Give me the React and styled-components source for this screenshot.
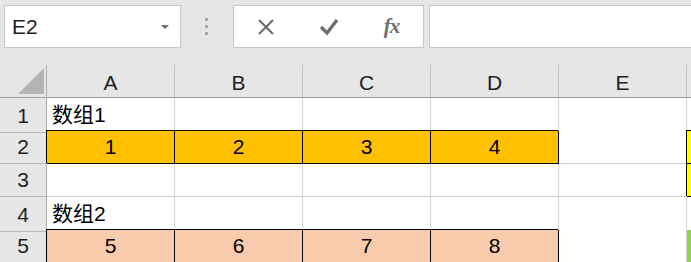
import React from 'react'
import styled, {createGlobalStyle} from 'styled-components'

const GlobalStyle = createGlobalStyle`
  html, body {
    margin: 0;
    padding: 0;
    background: #e6e6e6;
  }
  body {
    font-family: "Liberation Sans", "Noto Sans CJK SC", sans-serif;
  }
`

const Sheet = styled.div`
  width: 691px;
  height: 262px;
  overflow: hidden;
  background: #e6e6e6;
`

const FormulaBar = styled.div`
  display: flex;
  align-items: flex-start;
  height: 65px;
  box-sizing: border-box;
  padding: 5px 0 0 4px;
`

const Box = styled.div`
  height: 43px;
  box-sizing: border-box;
  border: 1px solid #c6c6c6;
  background: #fff;
  display: flex;
  align-items: center;
`

const NameBox = styled(Box)`
  width: 177px;
  flex: none;
  justify-content: space-between;
  padding: 0 11px 0 7px;
  font-size: 21px;
  color: #1e1e1e;
`

const Caret = styled.span`
  width: 0;
  height: 0;
  border-left: 4px solid transparent;
  border-right: 4px solid transparent;
  border-top: 4px solid #6d6d6d;
`

const Grip = styled.div`
  display: flex;
  flex-direction: column;
  gap: 4px;
  margin: 13px 25px 0 24px;
  span {
    width: 3px;
    height: 3px;
    background: #a8a8a8;
  }
`

const ActionBox = styled(Box)`
  width: 191px;
  flex: none;
`

const Action = styled.div`
  width: 63px;
  height: 100%;
  display: flex;
  align-items: center;
  justify-content: center;
  color: #6e6e6e;
`

const Fx = styled.span`
  font-family: "Liberation Serif", serif;
  font-style: italic;
  font-weight: bold;
  font-size: 21px;
  color: #707070;
  letter-spacing: -1px;
  margin-top: -1px;
`

const InputBox = styled(Box)`
  flex: 1;
  margin-left: 5px;
  margin-right: -2px;
`

const Row = styled.div`
  display: grid;
  grid-template-columns: 47px repeat(6, 128px);
  height: 33px;
`

const Corner = styled.div`
  box-sizing: border-box;
  border-right: 1px solid #ababab;
  border-bottom: 1px solid #9f9f9f;
  display: flex;
  align-items: flex-end;
  justify-content: flex-end;
  padding: 0 2px 3px 0;
  &::after {
    content: '';
    width: 26px;
    height: 26px;
    background: #b4b4b4;
    clip-path: polygon(100% 0, 100% 100%, 0 100%);
  }
`

const ColHead = styled.div`
  box-sizing: border-box;
  border-right: 1px solid #c3c3c3;
  border-bottom: 1px solid #9f9f9f;
  display: flex;
  align-items: center;
  justify-content: center;
  padding-top: 3px;
  font-size: 21px;
  color: #1e1e1e;
`

const RowHead = styled.div`
  box-sizing: border-box;
  border-right: 1px solid #ababab;
  border-bottom: 1px solid #b8b8b8;
  display: flex;
  align-items: flex-end;
  justify-content: center;
  padding-bottom: 4px;
  font-size: 21px;
  color: #1e1e1e;
`

const Cell = styled.div`
  position: relative;
  box-sizing: border-box;
  background: ${p => p.$fill || '#fff'};
  border-right: 1px solid ${p => p.$boxed ? '#000' : '#d4d4d4'};
  border-bottom: 1px solid ${p => p.$boxed ? '#000' : '#d4d4d4'};
  box-shadow: ${p => p.$boxed ? '-1px -1px 0 0 #000' : 'none'};
  display: flex;
  align-items: flex-end;
  justify-content: ${p => p.$left ? 'flex-start' : 'center'};
  padding: 0 0 4px ${p => p.$left ? '5px' : '0'};
  font-size: 21px;
  color: #000;
  white-space: nowrap;
`

const ORANGE = '#ffc000'
const PEACH = '#f8cbad'
const YELLOW = '#ffff00'
const GREEN = '#92d050'

// column F is only a sliver at the right edge, its letter falls outside the view
const columns = ['A', 'B', 'C', 'D', 'E', '']

const blank = {}
const rows = [
  {n: 1, cells: [{text: '数组1', left: true}, blank, blank, blank, blank, blank]},
  {n: 2, cells: [
    {text: '1', fill: ORANGE, boxed: true},
    {text: '2', fill: ORANGE, boxed: true},
    {text: '3', fill: ORANGE, boxed: true},
    {text: '4', fill: ORANGE, boxed: true},
    blank,
    {fill: YELLOW, boxed: true}
  ]},
  {n: 3, cells: [blank, blank, blank, blank, blank, {fill: YELLOW, boxed: true}]},
  {n: 4, cells: [{text: '数组2', left: true}, blank, blank, blank, blank, blank]},
  {n: 5, cells: [
    {text: '5', fill: PEACH, boxed: true},
    {text: '6', fill: PEACH, boxed: true},
    {text: '7', fill: PEACH, boxed: true},
    {text: '8', fill: PEACH, boxed: true},
    blank,
    {fill: GREEN}
  ]}
]

const CrossIcon = () => (
  <svg width="18" height="18" viewBox="0 0 18 18">
    <path d="M2 2 L16 16 M16 2 L2 16" stroke="currentColor" strokeWidth="2.2" fill="none" />
  </svg>
)

const CheckIcon = () => (
  <svg width="20" height="18" viewBox="0 0 20 18">
    <path d="M2 9 L8 15 L18 2" stroke="currentColor" strokeWidth="3.4" fill="none" strokeLinejoin="miter" />
  </svg>
)

export default function App () {
  return (
    <Sheet>
      <GlobalStyle />
      <FormulaBar>
        <NameBox>
          E2
          <Caret />
        </NameBox>
        <Grip>
          <span /><span /><span />
        </Grip>
        <ActionBox>
          <Action><CrossIcon /></Action>
          <Action><CheckIcon /></Action>
          <Action><Fx>fx</Fx></Action>
        </ActionBox>
        <InputBox />
      </FormulaBar>

      <Row>
        <Corner />
        {columns.map((c, i) => <ColHead key={i}>{c}</ColHead>)}
      </Row>

      {rows.map(row => (
        <Row key={row.n}>
          <RowHead>{row.n}</RowHead>
          {row.cells.map((cell, i) => (
            <Cell key={i} $fill={cell.fill} $boxed={cell.boxed} $left={cell.left}>
              {cell.text}
            </Cell>
          ))}
        </Row>
      ))}
    </Sheet>
  )
}
